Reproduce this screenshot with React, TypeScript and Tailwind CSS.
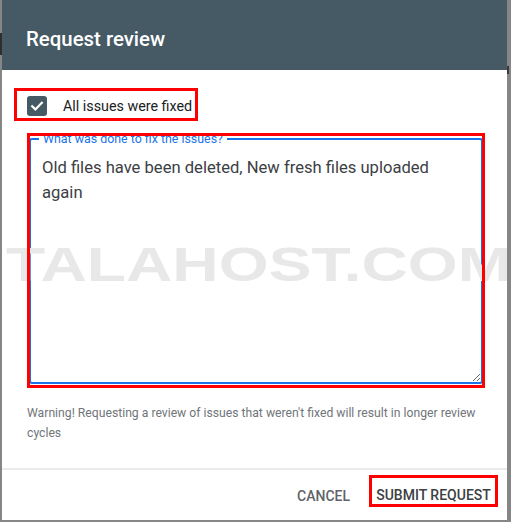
import { Fragment } from 'react';

/**
 * Diálogo "Request review" con recuadros rojos de anotación
 * y la marca de agua encima del contenido.
 */
export default function App() {
  return (
    <div className="relative flex h-[522px] w-[511px] overflow-hidden bg-[#868686] font-['Roboto','Liberation_Sans',sans-serif]">
      <div className="flex w-[2px] flex-col">
        <div className="mt-[33px] h-[22px] bg-[#2e2e2e]"></div>
      </div>

      <div className="flex h-[520px] w-[505px] flex-col bg-white">
        {/* cabecera */}
        <div className="h-[70px] shrink-0 bg-[#455a64] pl-[24px] pt-[27px]">
          <h1 className="text-[20.4px] font-medium leading-[24px] text-white">Request review</h1>
        </div>

        {/* casilla */}
        <div className="ml-[12px] mt-[18px] flex w-[184px] items-start border-[3px] border-[#ff0000] pb-[2px] pl-[10px] pt-[5px]">
          <span className="flex h-[20px] w-[20px] shrink-0 items-center justify-center rounded-[3px] bg-[#455a64]">
            <svg width="20" height="20" viewBox="0 0 20 20" fill="none">
              <path d="M5.2 10.2l3.2 3.2 6.4-6.6" stroke="white" strokeWidth="2.2" strokeLinecap="square" />
            </svg>
          </span>
          <span className="ml-[16px] whitespace-nowrap text-[14.3px] leading-[20px] text-[#202124]">
            All issues were fixed
          </span>
        </div>

        {/* campo de texto */}
        <div className="relative ml-[25px] mt-[12px] w-[458px] px-[2px] pb-[4px]">
          <fieldset className="h-[251px] rounded-[3px] border-2 border-[#1a73e8]">
            <legend className="ml-[8px] px-[4px] text-[12.4px] leading-[12px] text-[#1a73e8]">
              What was done to fix the issues?
            </legend>
            <textarea
              readOnly
              defaultValue="Old files have been deleted, New fresh files uploaded again"
              className="block h-[237px] w-full resize-y bg-transparent pl-[11px] pr-[30px] pt-[10px] text-[16.6px] leading-[25px] text-[#3c4043] outline-none"
            />
          </fieldset>
          <div className="pointer-events-none absolute inset-0 z-20 border-[3px] border-[#ff0000]"></div>
        </div>

        <p className="ml-[25px] mr-[22px] mt-[15px] text-[12.2px] leading-[20px] text-[#70757a]">
          Warning! Requesting a review of issues that weren't fixed will result in longer review cycles
        </p>

        <div className="mt-auto border-t-2 border-[#ebebeb]">
          <div className="flex h-[50px] items-start justify-end pr-[9px] pt-[5px]">
            <button className="mr-[11px] h-[32px] px-[8px] pt-[10px] text-[14px] font-medium leading-[20px] text-[#5f6368]">
              CANCEL
            </button>
            <button className="h-[32px] w-[129px] border-[3px] border-[#ff0000] pt-[7px] text-center text-[14px] font-medium leading-[20px] text-[#3c4043]">
              SUBMIT REQUEST
            </button>
          </div>
        </div>
      </div>

      <div className="flex flex-1 flex-col">
        <div className="mt-[66px] h-[8px] w-[2px] bg-[#3a3a3a]"></div>
      </div>

      {/* marca de agua */}
      <Fragment>
        <div className="pointer-events-none absolute left-[6px] top-[240px] z-10 origin-left scale-x-[1.31] whitespace-nowrap font-['Liberation_Sans',Arial,sans-serif] text-[49px] font-bold leading-[49px] text-[#e8e8e8]">
          TALAHOST.COM
        </div>
      </Fragment>
    </div>
  );
}
